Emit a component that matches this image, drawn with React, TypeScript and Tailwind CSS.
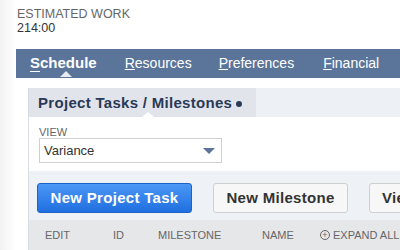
import React from "react";

export default function App() {
  return (
    <div
      className="relative w-[400px] h-[250px] overflow-hidden bg-white"
      style={{ fontFamily: '"Liberation Sans", Arial, sans-serif' }}
    >
      <div className="absolute left-0 top-0 h-full w-[16px] bg-gradient-to-r from-[#f2f2f2] to-white" />
      <div className="relative pl-[17px] pt-[7px] leading-[14px]">
        <div className="text-[12.5px] text-[#666]">ESTIMATED WORK</div>
        <div className="text-[12.5px] text-[#333]">214:00</div>
      </div>

      <div className="relative ml-[16px] mt-[14px] h-[29px] bg-[#5b7499] flex items-center text-white text-[14px]">
        <div className="relative ml-[14px] font-bold text-[15px]">
          <u className="no-underline border-b border-white">S</u>chedule
          <div className="absolute left-[30px] top-[19px] w-0 h-0 border-l-[6px] border-r-[6px] border-b-[6px] border-l-transparent border-r-transparent border-b-[#e6e9ee]" />
        </div>
        <div className="ml-[28px]"><span className="underline">R</span>esources</div>
        <div className="ml-[27px]"><span className="underline">P</span>references</div>
        <div className="ml-[29px]"><span className="underline">F</span>inancial</div>
      </div>

      <div className="relative ml-[28px] mt-[10px] border-l border-[#d9dde3] h-[200px]">
        <div className="flex h-[29px]">
          <div className="relative w-[227px] shrink-0 bg-[#e1e5eb] flex items-center pl-[9px] pt-[2px] text-[15px] font-bold tracking-[0.3px] text-[#2a3956] whitespace-nowrap">
            Pro<span className="underline">j</span>ect Tasks / Milestones
            <span className="ml-[4px] inline-block w-[6px] h-[6px] rounded-full bg-[#2a3956]" />
            <div className="absolute left-[113px] bottom-0 w-0 h-0 border-l-[6px] border-r-[6px] border-b-[5px] border-l-transparent border-r-transparent border-b-white" />
          </div>
          <div className="flex-1 bg-[#edf0f4]" />
        </div>
        <div className="bg-white h-[54px] pl-[10px] pt-[9px]">
          <div className="text-[11px] leading-[12px] text-[#666]">VIEW</div>
          <div className="mt-[0px] w-[183px] h-[25px] border border-[#d0d0d0] flex items-center justify-between pl-[4px] pr-[6px]">
            <span className="text-[13px] text-[#333]">Variance</span>
            <span className="w-0 h-0 border-l-[6px] border-r-[6px] border-t-[6px] border-l-transparent border-r-transparent border-t-[#5b7499]" />
          </div>
        </div>
        <div className="bg-[#eef1f5] pt-[12px] pb-[7px] flex gap-[21px] pl-[8px]">
          <div className="shrink-0 h-[30px] w-[155px] rounded-[3px] bg-gradient-to-b from-[#4a97f5] to-[#1f6fe0] border border-[#1c63c9] flex items-center justify-center text-white font-bold text-[15px] tracking-[0.3px] whitespace-nowrap">
            New Project Task
          </div>
          <div className="shrink-0 h-[30px] w-[135px] rounded-[3px] bg-[#f7f7f7] border border-[#cfcfcf] flex items-center justify-center text-[#333] font-bold text-[15px] tracking-[0.3px] whitespace-nowrap">
            New Milestone
          </div>
          <div className="shrink-0 h-[30px] w-[80px] rounded-[3px] bg-[#f7f7f7] border border-[#cfcfcf] flex items-center pl-[12px] text-[#333] font-bold text-[15px] tracking-[0.3px]">
            View
          </div>
        </div>
        <div className="relative bg-[#e6e7e9] h-[30px] text-[11px] text-[#666] flex items-center">
          <span className="absolute left-[16px]">EDIT</span>
          <span className="absolute left-[84px]">ID</span>
          <span className="absolute left-[129px]">MILESTONE</span>
          <span className="absolute left-[233px]">NAME</span>
          <span className="absolute left-[291px] flex items-center gap-[3px] whitespace-nowrap">
            <span className="inline-flex w-[10px] h-[10px] rounded-full border border-[#666] items-center justify-center text-[9px] leading-none">+</span>
            EXPAND ALL
          </span>
        </div>
      </div>
    </div>
  );
}
